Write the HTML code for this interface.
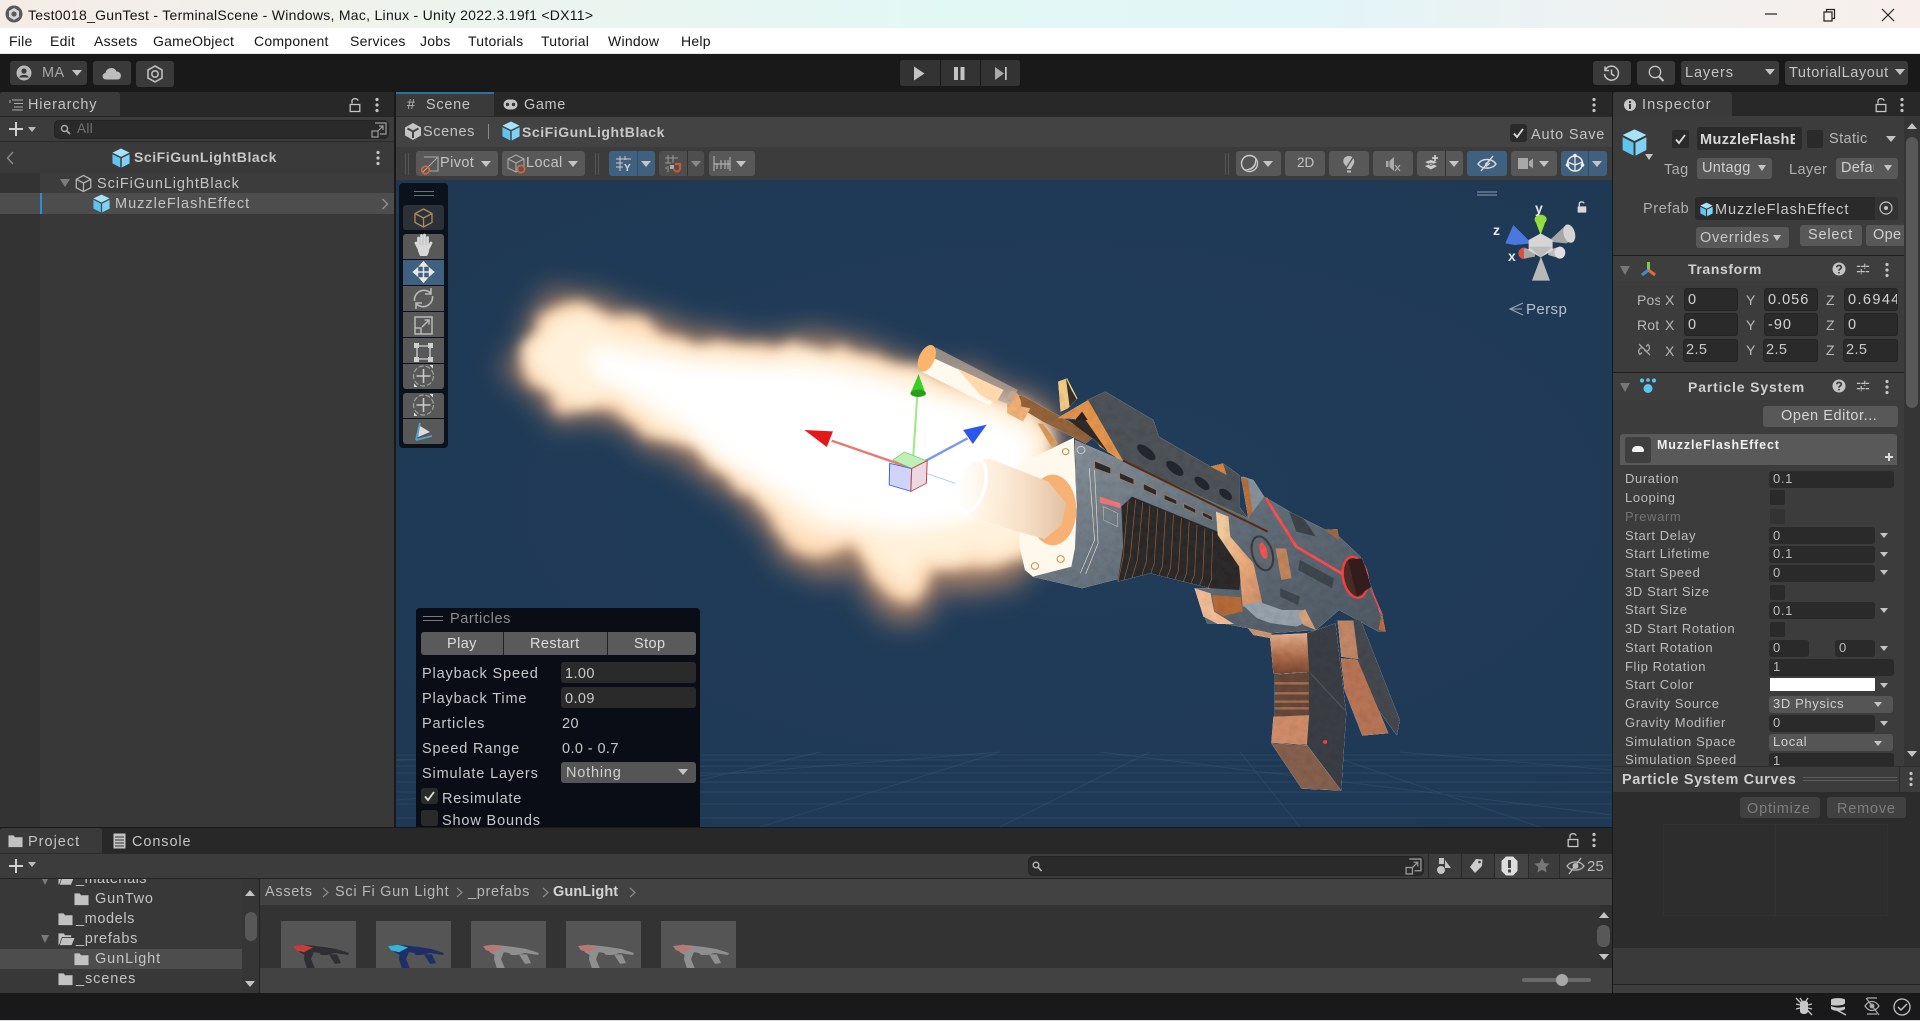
<!DOCTYPE html>
<html><head><meta charset="utf-8"><title>Unity</title>
<style>
*{box-sizing:border-box}
html,body{margin:0;padding:0;width:1920px;height:1021px;overflow:hidden;background:#191919}
body{position:relative;font-family:"Liberation Sans",sans-serif}
.a{position:absolute}
.t{position:absolute;white-space:nowrap;line-height:20px;height:20px;font-size:14.5px;letter-spacing:.4px;color:#c4c4c4}
.b{font-weight:bold}
.m{color:#141414;font-size:14px;letter-spacing:.25px}
.s{font-size:13px;letter-spacing:.62px;color:#bdbdbd;line-height:18px;height:18px}
.btn{position:absolute;background:#585858;border-radius:3px}
.blue{background:#40607f}
.f{position:absolute;background:#2a2a2a;border-radius:3px;border:1px solid #242424}
.ar{position:absolute;width:0;height:0;border-left:5.5px solid transparent;border-right:5.5px solid transparent;border-top:6.5px solid #c4c4c4}
.n{border-left-width:4.5px;border-right-width:4.5px;border-top-width:5px}
svg{position:absolute;overflow:visible}
.sep{position:absolute;width:1px;background:#2a2a2a}
.p{letter-spacing:.85px;color:#c8c8c8}
</style></head><body>

<svg width="0" height="0" style="left:0;top:0">
<defs>
<symbol id="cube" viewBox="0 0 20 22"><path d="M10 .5 19.5 5 10 9.8 .5 5Z" fill="#a6e3f8"/><path d="M.5 6.8 9.2 11.2V21.5L.5 17Z" fill="#5fc5ef"/><path d="M19.5 6.8 10.8 11.2V21.5L19.5 17Z" fill="#7fd2f4"/></symbol>
<symbol id="cubeo" viewBox="0 0 20 22"><path d="M10 1.5 18.5 6V16L10 20.5 1.5 16V6ZM1.5 6 10 10.5 18.5 6M10 10.5V20.5" fill="none" stroke="#b5b5b5" stroke-width="1.5"/></symbol>
<symbol id="dots" viewBox="0 0 4 16"><circle cx="2" cy="2.5" r="1.6" fill="#c4c4c4"/><circle cx="2" cy="8" r="1.6" fill="#c4c4c4"/><circle cx="2" cy="13.5" r="1.6" fill="#c4c4c4"/></symbol>
<symbol id="lock" viewBox="0 0 12 16"><path d="M3 6.5V3.8C3 1 9 1 9 3.8" fill="none" stroke="#c4c4c4" stroke-width="1.3"/><rect x="1.2" y="7.5" width="9.6" height="7" fill="none" stroke="#c4c4c4" stroke-width="1.3"/></symbol>
<symbol id="folder" viewBox="0 0 16 14"><path d="M.5 1H6L7.5 3H15.5V13.5H.5Z" fill="#c2c2c2"/></symbol>
<symbol id="folderopen" viewBox="0 0 18 14"><path d="M.5 1H6L7.5 3H14V5H4L1.7 12 .5 13.5Z" fill="#c2c2c2"/><path d="M4.5 6H17.5L14.5 13.5H2Z" fill="#c2c2c2"/></symbol>
<symbol id="help" viewBox="0 0 14 14"><circle cx="7" cy="7" r="6.5" fill="#c4c4c4"/><path d="M4.8 5.4C4.8 2.8 9.3 2.8 9.3 5.4 9.3 7 7 7 7 8.7M7 10V11.4" stroke="#3c3c3c" stroke-width="1.7" fill="none"/></symbol>
<symbol id="slid" viewBox="0 0 16 16"><path d="M1 5H15M1 11H15M10 2V8M6 8V14" stroke="#c4c4c4" stroke-width="1.3" fill="none" stroke-dasharray="4 1"/></symbol>
<symbol id="extlink" viewBox="0 0 16 16"><path d="M4 1H15V12H9M1 9H7V15H1ZM7 9 12 4M8 4H12V8" fill="none" stroke="#9a9a9a" stroke-width="1.2"/></symbol>
<linearGradient id="barrel" x1="1" y1="0" x2="0" y2="0"><stop offset="0" stop-color="#e2c0a2"/><stop offset=".35" stop-color="#f5dfc6"/><stop offset=".7" stop-color="#ffefdb" stop-opacity=".8"/><stop offset="1" stop-color="#fff" stop-opacity=".15"/></linearGradient>
<linearGradient id="body" x1="0" y1="0" x2="1" y2="1"><stop offset="0" stop-color="#8b959d"/><stop offset=".5" stop-color="#626e79"/><stop offset="1" stop-color="#4f5963"/></linearGradient>
<linearGradient id="cop" x1="0" y1="0" x2="0" y2="1"><stop offset="0" stop-color="#e8b08c"/><stop offset=".55" stop-color="#b06f4e"/><stop offset="1" stop-color="#7a4630"/></linearGradient>
<linearGradient id="trim" x1="0" y1="0" x2="1" y2="1"><stop offset="0" stop-color="#f2d6a8"/><stop offset=".6" stop-color="#e9a878"/><stop offset="1" stop-color="#cc8c68"/></linearGradient>
<filter id="fA" x="-30%" y="-30%" width="160%" height="160%"><feTurbulence type="fractalNoise" baseFrequency=".03 .045" numOctaves="3" seed="4"/><feDisplacementMap in="SourceGraphic" scale="26" xChannelSelector="R" yChannelSelector="G"/><feGaussianBlur stdDeviation="14"/></filter>
<filter id="fB" x="-30%" y="-30%" width="160%" height="160%"><feTurbulence type="fractalNoise" baseFrequency=".035 .055" numOctaves="3" seed="9"/><feDisplacementMap in="SourceGraphic" scale="28" xChannelSelector="R" yChannelSelector="G"/><feGaussianBlur stdDeviation="7"/></filter>
<filter id="fD" x="-30%" y="-30%" width="160%" height="160%"><feTurbulence type="fractalNoise" baseFrequency=".03 .05" numOctaves="3" seed="14"/><feDisplacementMap in="SourceGraphic" scale="24" xChannelSelector="R" yChannelSelector="G"/><feGaussianBlur stdDeviation="8"/></filter>
<filter id="fC" x="-20%" y="-20%" width="140%" height="140%"><feGaussianBlur stdDeviation="9"/></filter>
<filter id="tex" x="-5%" y="-5%" width="110%" height="110%"><feTurbulence type="fractalNoise" baseFrequency=".045" numOctaves="3" seed="7"/><feColorMatrix values=".32 0 0 0 .79 .32 0 0 0 .79 .32 0 0 0 .79 0 0 0 0 1"/><feComposite in2="SourceAlpha" operator="in" result="n"/><feBlend in="SourceGraphic" in2="n" mode="multiply"/></filter>
<clipPath id="ribs"><path d="M620 500 650 470 890 575 960 680 950 750 870 745 700 700 610 725 625 620Z"/></clipPath>
<clipPath id="blk"><path d="M330 375 487 293 495 500 490 625 480 680 372 710 350 690 335 620Z"/></clipPath>
</defs>
</svg>

<!-- title bar -->
<div class="a" style="left:0;top:0;width:1920px;height:28px;background:linear-gradient(90deg,#f6ece6 0%,#eef3ee 22%,#e2f8f5 50%,#e2f5f7 68%,#eef2f2 82%,#f8efec 100%)"></div>
<svg style="left:5px;top:5px" width="18" height="18" viewBox="0 0 18 18"><circle cx="9" cy="9" r="8.5" fill="#5a5a5a"/><path d="M9 3 14 6V12L9 15 4 12V6Z" fill="#d8d8d8"/><circle cx="9" cy="9" r="2.6" fill="#5a5a5a"/></svg>
<div class="t m" style="left:28px;top:5px;letter-spacing:.28px">Test0018_GunTest - TerminalScene - Windows, Mac, Linux - Unity 2022.3.19f1 &lt;DX11&gt;</div>
<svg style="left:1765px;top:8px" width="140" height="14" viewBox="0 0 140 14"><path d="M0 6H12" stroke="#222" stroke-width="1.2"/><path d="M59 4H67V13H59ZM61.5 4V1.5H69.5V10.5H67" fill="none" stroke="#222" stroke-width="1.2"/><path d="M117 1 129 13M129 1 117 13" stroke="#222" stroke-width="1.2"/></svg>

<!-- menu -->
<div class="a" style="left:0;top:28px;width:1920px;height:25px;background:#fff"></div>
<div class="a" style="left:0;top:53px;width:1920px;height:1px;background:#e8e8e8"></div>
<div class="t m" style="left:9px;top:31px">File</div>
<div class="t m" style="left:50px;top:31px">Edit</div>
<div class="t m" style="left:94px;top:31px">Assets</div>
<div class="t m" style="left:153px;top:31px">GameObject</div>
<div class="t m" style="left:254px;top:31px">Component</div>
<div class="t m" style="left:350px;top:31px">Services</div>
<div class="t m" style="left:420px;top:31px">Jobs</div>
<div class="t m" style="left:468px;top:31px">Tutorials</div>
<div class="t m" style="left:541px;top:31px">Tutorial</div>
<div class="t m" style="left:608px;top:31px">Window</div>
<div class="t m" style="left:681px;top:31px">Help</div>

<!-- main toolbar -->
<div class="a" style="left:0;top:54px;width:1920px;height:38px;background:#191919"></div>
<div class="btn" style="left:10px;top:61px;width:77px;height:24px;background:#3a3a3a"></div>
<svg style="left:16px;top:65px" width="16" height="16" viewBox="0 0 16 16"><circle cx="8" cy="8" r="7.5" fill="#b8b8b8"/><circle cx="8" cy="6" r="2.6" fill="#3a3a3a"/><path d="M3.2 12.5C4 9 12 9 12.8 12.5" fill="#3a3a3a"/></svg>
<div class="t" style="left:42px;top:63px;color:#a8a8a8">MA</div>
<div class="ar" style="left:72px;top:70px"></div>
<div class="btn" style="left:93px;top:61px;width:38px;height:24px;background:#3a3a3a"></div>
<svg style="left:102px;top:66px" width="20" height="14" viewBox="0 0 20 14"><path d="M4.5 13.5C-.5 13.5 -.5 7.5 3.5 7 4 2 12 -.5 14.5 5.5 20 5.5 20.5 13.5 15.5 13.5Z" fill="#bdbdbd"/></svg>
<div class="btn" style="left:136px;top:61px;width:38px;height:26px;background:#3a3a3a"></div>
<svg style="left:147px;top:65px" width="16" height="18" viewBox="0 0 16 18"><path d="M8 1 15 5V13L8 17 1 13V5Z" fill="none" stroke="#bdbdbd" stroke-width="1.6"/><circle cx="8" cy="9" r="3.2" fill="none" stroke="#bdbdbd" stroke-width="1.6"/></svg>
<div class="btn" style="left:900px;top:60px;width:120px;height:26px;background:#333"></div>
<div class="a" style="left:940px;top:60px;width:1px;height:26px;background:#191919"></div>
<div class="a" style="left:980px;top:60px;width:1px;height:26px;background:#191919"></div>
<svg style="left:914px;top:66px" width="96" height="15" viewBox="0 0 96 15"><path d="M0 .5 10.5 7.5 0 14.5Z" fill="#c4c4c4"/><rect x="40" y="1" width="4" height="13" fill="#c4c4c4"/><rect x="46.5" y="1" width="4" height="13" fill="#c4c4c4"/><path d="M81 1 90 7.5 81 14Z" fill="#aaa"/><rect x="91" y="1" width="1.7" height="13" fill="#c4c4c4"/></svg>
<div class="btn" style="left:1593px;top:61px;width:38px;height:24px;background:#3a3a3a"></div>
<svg style="left:1603px;top:65px" width="17" height="17" viewBox="0 0 17 17"><path d="M2.2 5A7 7 0 1 1 1.5 9M2 1.5V5.5H6M8.5 4.5V9L11.5 11" fill="none" stroke="#c4c4c4" stroke-width="1.5"/></svg>
<div class="btn" style="left:1637px;top:61px;width:38px;height:24px;background:#3a3a3a"></div>
<svg style="left:1648px;top:65px" width="17" height="17" viewBox="0 0 17 17"><circle cx="7" cy="7" r="5.7" fill="none" stroke="#c4c4c4" stroke-width="1.3"/><path d="M11 11.5 15.5 16" stroke="#c4c4c4" stroke-width="2"/></svg>
<div class="btn" style="left:1681px;top:61px;width:98px;height:24px;background:#3a3a3a"></div>
<div class="t" style="left:1685px;top:63px;letter-spacing:.9px">Layers</div>
<div class="ar" style="left:1765px;top:69px"></div>
<div class="btn" style="left:1785px;top:61px;width:123px;height:24px;background:#3a3a3a"></div>
<div class="t" style="left:1789px;top:63px;letter-spacing:.6px">TutorialLayout</div>
<div class="ar" style="left:1895px;top:69px"></div>

<!-- hierarchy -->
<div class="a" style="left:0;top:92px;width:394px;height:24px;background:#282828"></div>
<div class="a" style="left:0;top:92px;width:120px;height:24px;background:#3a3a3a;border-radius:3px 3px 0 0"></div>
<svg style="left:9px;top:99px" width="14" height="12" viewBox="0 0 14 12"><path d="M3 1H14M5 4.5H14M5 8H14M3 11H14M1 1V4" stroke="#aaa" stroke-width="1" fill="none"/></svg>
<div class="t" style="left:28px;top:95px;letter-spacing:.8px">Hierarchy</div>
<svg style="left:349px;top:97px" width="12" height="16"><use href="#lock"/></svg>
<svg style="left:375px;top:97px" width="4" height="16"><use href="#dots"/></svg>
<div class="a" style="left:0;top:116px;width:394px;height:26px;background:#3c3c3c;border-top:1px solid #232323;border-bottom:1px solid #2a2a2a"></div>
<svg style="left:8px;top:121px" width="16" height="16" viewBox="0 0 16 16"><path d="M8 1V15M1 8H15" stroke="#d0d0d0" stroke-width="2"/></svg>
<div class="ar" style="left:28px;top:127px;border-top-color:#bbb;border-left-width:4.5px;border-right-width:4.5px;border-top-width:5.5px"></div>
<div class="f" style="left:54px;top:120px;width:335px;height:19px;border-radius:5px"></div>
<svg style="left:60px;top:124px" width="12" height="12" viewBox="0 0 12 12"><circle cx="4.5" cy="4.5" r="3" fill="none" stroke="#aaa" stroke-width="1.4"/><path d="M6.5 6.5 10 10" stroke="#aaa" stroke-width="1.8"/></svg>
<div class="t" style="left:77px;top:119px;color:#737373;font-size:13.5px">All</div>
<svg style="left:371px;top:122px" width="16" height="16"><use href="#extlink"/></svg>
<div class="a" style="left:0;top:142px;width:394px;height:31px;background:#3a3a3a"></div>
<svg style="left:6px;top:151px" width="9" height="14" viewBox="0 0 9 14"><path d="M7 1 1.5 7 7 13" fill="none" stroke="#8a8a8a" stroke-width="1.4"/></svg>
<svg style="left:112px;top:148px" width="18" height="20"><use href="#cube"/></svg>
<div class="t b" style="left:134px;top:147px;letter-spacing:.55px;color:#c8c8c8;font-size:14px">SciFiGunLightBlack</div>
<svg style="left:376px;top:150px" width="4" height="16"><use href="#dots"/></svg>
<div class="a" style="left:0;top:173px;width:394px;height:654px;background:#383838"></div>
<div class="a" style="left:0;top:173px;width:40px;height:654px;background:#333"></div>
<div class="a" style="left:40px;top:173px;width:354px;height:20px;background:#3c3c3c"></div>
<div class="a" style="left:60px;top:179px;width:0;height:0;border-left:5px solid transparent;border-right:5px solid transparent;border-top:8px solid #7c7c7c"></div>
<svg style="left:75px;top:174px" width="17" height="19"><use href="#cubeo"/></svg>
<div class="t" style="left:97px;top:174px;letter-spacing:.9px">SciFiGunLightBlack</div>
<div class="a" style="left:0;top:193px;width:394px;height:21px;background:#4d4d4d"></div>
<div class="a" style="left:40px;top:193px;width:2px;height:21px;background:#2a8fca"></div>
<svg style="left:93px;top:194px" width="17" height="19"><use href="#cube"/></svg>
<div class="t" style="left:115px;top:194px;letter-spacing:1px">MuzzleFlashEffect</div>
<svg style="left:381px;top:198px" width="8" height="12" viewBox="0 0 8 12"><path d="M1.5 1 6.5 6 1.5 11" fill="none" stroke="#8e8e8e" stroke-width="1.5"/></svg>
<div class="a" style="left:394px;top:92px;width:2px;height:736px;background:#191919"></div>

<!-- scene tabs -->
<div class="a" style="left:396px;top:92px;width:1216px;height:24px;background:#282828"></div>
<div class="a" style="left:396px;top:92px;width:98px;height:24px;background:#3a3a3a;border-top:2px solid #2f6f9f"></div>
<div class="t" style="left:407px;top:95px;color:#bbb">#</div>
<div class="t" style="left:426px;top:95px;letter-spacing:.7px">Scene</div>
<svg style="left:503px;top:99px" width="15" height="11" viewBox="0 0 15 11"><rect x=".5" y=".5" width="14" height="10" rx="5" fill="#c4c4c4"/><circle cx="4.5" cy="5.5" r="1.7" fill="#333"/><circle cx="10.5" cy="5.5" r="1.7" fill="#333"/></svg>
<div class="t" style="left:524px;top:95px;letter-spacing:.6px">Game</div>
<svg style="left:1592px;top:97px" width="4" height="16"><use href="#dots"/></svg>
<div class="a" style="left:396px;top:116px;width:1216px;height:31px;background:#434343;border-top:1px solid #2c2c2c"></div>
<svg style="left:404px;top:122px" width="18" height="19" viewBox="0 0 18 19"><path d="M9 1 17 5.5V13.5L9 18 1 13.5V5.5Z" fill="#c4c4c4"/><path d="M9 9.5 3.5 6.5M9 9.5 14.5 6.5M9 9.5V16" stroke="#434343" stroke-width="2"/></svg>
<div class="t" style="left:423px;top:122px;letter-spacing:.6px">Scenes</div>
<div class="a" style="left:488px;top:124px;width:1px;height:15px;background:#8a8a8a"></div>
<svg style="left:502px;top:121px" width="18" height="20"><use href="#cube"/></svg>
<div class="t b" style="left:522px;top:122px;letter-spacing:.55px;font-size:14px;color:#c8c8c8">SciFiGunLightBlack</div>
<div class="a" style="left:1510px;top:124px;width:17px;height:18px;background:#2a2a2a;border-radius:3px"></div>
<svg style="left:1512px;top:127px" width="13" height="12" viewBox="0 0 13 12"><path d="M2 6.5 5 10 11 2" fill="none" stroke="#ddd" stroke-width="1.8"/></svg>
<div class="t" style="left:1531px;top:125px;letter-spacing:.8px">Auto Save</div>

<!-- scene toolbar -->
<div class="a" style="left:396px;top:147px;width:1216px;height:33px;background:#3c3c3c"></div>
<div class="a" style="left:405px;top:153px;width:1px;height:22px;background:#555"></div>
<div class="a" style="left:408px;top:153px;width:1px;height:22px;background:#555"></div>
<div class="btn" style="left:416px;top:151px;width:82px;height:25px"></div>
<svg style="left:420px;top:153px" width="20" height="22" viewBox="0 0 20 22"><path d="M4 4H18V18H9M3 19 17 5" fill="none" stroke="#aaa" stroke-width="1.1"/><circle cx="5.5" cy="17" r="3.8" fill="none" stroke="#d8663a" stroke-width="1.7"/></svg>
<div class="t" style="left:440px;top:153px">Pivot</div>
<div class="ar" style="left:481px;top:161px"></div>
<div class="btn" style="left:502px;top:151px;width:83px;height:25px"></div>
<svg style="left:506px;top:153px" width="20" height="22" viewBox="0 0 20 22"><path d="M10 2 18 6V15L10 19 2 15V6ZM2 6 10 10 18 6M10 10V19" fill="none" stroke="#aaa" stroke-width="1.1"/><circle cx="15" cy="16" r="3.6" fill="#585858" stroke="#d8663a" stroke-width="1.7"/></svg>
<div class="t" style="left:526px;top:153px">Local</div>
<div class="ar" style="left:568px;top:161px"></div>
<div class="a" style="left:595px;top:153px;width:1px;height:22px;background:#555"></div>
<div class="a" style="left:598px;top:153px;width:1px;height:22px;background:#555"></div>
<div class="btn blue" style="left:609px;top:151px;width:46px;height:25px"></div>
<div class="a" style="left:637px;top:151px;width:1px;height:25px;background:#2e4a66"></div>
<svg style="left:615px;top:155px" width="17" height="17" viewBox="0 0 17 17"><path d="M1 4H16M1 8H8M1 12H8M5 1V16M10 1V5" stroke="#ccc" stroke-width="1" fill="none"/><text x="9" y="16" font-family="Liberation Sans" font-size="10" font-weight="bold" fill="#ddd">Y</text></svg>
<div class="ar" style="left:641px;top:161px"></div>
<div class="btn" style="left:659px;top:151px;width:45px;height:25px;background:#4e4e4e"></div>
<div class="a" style="left:687px;top:151px;width:1px;height:25px;background:#333"></div>
<svg style="left:664px;top:154px" width="18" height="19" viewBox="0 0 18 19"><path d="M1 4H14M4 1V9M9 1V9M1 9H7M1 14H3M4 12V18" stroke="#999" stroke-width="1"/><rect x="6" y="11" width="4" height="4" fill="#aaa"/><path d="M11 10H16V14.5A3 3 0 0 1 10 14.5" fill="none" stroke="#c65a30" stroke-width="2.2"/></svg>
<div class="ar" style="left:691px;top:161px;border-top-color:#8a8a8a"></div>
<div class="btn" style="left:709px;top:151px;width:46px;height:25px"></div>
<svg style="left:713px;top:154px" width="18" height="19" viewBox="0 0 18 19"><path d="M1 2V17M17 3V17M4 9V15M8 6V15M12 6V15M15 6V15M1 10H17" stroke="#bbb" stroke-width="1" fill="none"/></svg>
<div class="ar" style="left:736px;top:161px"></div>
<div class="a" style="left:1225px;top:153px;width:1px;height:22px;background:#555"></div>
<div class="a" style="left:1228px;top:153px;width:1px;height:22px;background:#555"></div>
<div class="btn" style="left:1236px;top:151px;width:45px;height:25px"></div>
<svg style="left:1240px;top:154px" width="19" height="19" viewBox="0 0 19 19"><circle cx="9.5" cy="9.5" r="8" fill="#555" stroke="#ccc" stroke-width="1.4"/><path d="M4 15C10 16 16 12 15 4 19 11 12 19 4 15Z" fill="#ccc"/></svg>
<div class="ar" style="left:1263px;top:161px"></div>
<div class="btn" style="left:1285px;top:151px;width:40px;height:25px"></div>
<div class="t" style="left:1297px;top:153px;font-size:13.5px;letter-spacing:0">2D</div>
<div class="btn" style="left:1329px;top:151px;width:40px;height:25px"></div>
<svg style="left:1342px;top:155px" width="15" height="18" viewBox="0 0 15 18"><path d="M7 1C1 1 0 7 3 10 4.5 11.5 4.5 13 5 14H9C9.5 12 11 10.5 11.7 9 13.5 5 11 1 7 1ZM5 15.5H9V17.5H5Z" fill="#bdbdbd"/><path d="M12 1 3 15" stroke="#585858" stroke-width="1.4"/></svg>
<div class="btn" style="left:1373px;top:151px;width:40px;height:25px"></div>
<svg style="left:1386px;top:156px" width="15" height="16" viewBox="0 0 15 16"><path d="M0 5H2.5V11H0ZM3.5 5 8 1V15L3.5 11Z" fill="#aaa"/><path d="M9 9 14 15M14 9 9 15" stroke="#aaa" stroke-width="1.3"/></svg>
<div class="btn" style="left:1417px;top:151px;width:46px;height:25px"></div>
<div class="a" style="left:1445px;top:151px;width:1px;height:25px;background:#333"></div>
<svg style="left:1423px;top:154px" width="17" height="18" viewBox="0 0 17 18"><path d="M1 12 8 9 15 12 8 16ZM1 8 8 5.5 15 8 8 11.5Z" fill="#ccc" stroke="#585858" stroke-width=".8"/><path d="M12 1V7M9 4H15" stroke="#ccc" stroke-width="1.8"/></svg>
<div class="ar" style="left:1449px;top:161px"></div>
<div class="btn blue" style="left:1467px;top:151px;width:40px;height:25px"></div>
<svg style="left:1477px;top:154px" width="20" height="19" viewBox="0 0 20 19"><path d="M1 10C5 4 15 4 19 10 15 15.5 5 15.5 1 10Z" fill="none" stroke="#ddd" stroke-width="1.4"/><path d="M8 10.5 12 7M9 12.5 13 9" stroke="#ddd" stroke-width="1.2"/><path d="M16 2 4 17" stroke="#ddd" stroke-width="1.4"/></svg>
<div class="btn" style="left:1511px;top:151px;width:46px;height:25px"></div>
<svg style="left:1518px;top:157px" width="16" height="13" viewBox="0 0 16 13"><rect x="0" y="1" width="10" height="11" fill="#a8a8a8"/><path d="M11 4.5 15 1.5V11.5L11 8.5Z" fill="#a8a8a8"/></svg>
<div class="ar" style="left:1539px;top:161px"></div>
<div class="btn blue" style="left:1561px;top:151px;width:46px;height:25px"></div>
<div class="a" style="left:1588px;top:151px;width:1px;height:25px;background:#2e4a66"></div>
<svg style="left:1565px;top:153px" width="20" height="21" viewBox="0 0 20 21"><circle cx="10" cy="10.5" r="7.5" fill="none" stroke="#e8e8e8" stroke-width="1.6"/><path d="M2.5 9 10 12 17.5 9M10 3V18" stroke="#e8e8e8" stroke-width="1.3" fill="none"/><circle cx="10" cy="2.5" r="1.8" fill="#eee"/><circle cx="2.5" cy="12" r="1.8" fill="#eee"/><circle cx="17.5" cy="12" r="1.8" fill="#eee"/></svg>
<div class="ar" style="left:1592px;top:161px"></div>

<!-- scene view -->
<div class="a" style="left:396px;top:180px;width:1216px;height:647px;background:radial-gradient(ellipse at 55% 50%,#213c59 0%,#1f3a56 70%,#1f3853 100%);overflow:hidden">
<svg style="left:0;top:0" width="1216" height="647" viewBox="396 180 1216 647">
 <g stroke="#5f84a6" stroke-opacity=".17" stroke-width="1" fill="none">
  <path d="M396 755H1612M396 760H1612M396 766H1612M396 773H1612M396 782H1612M396 792H1612M396 804H1612M396 818H1612"/>
  <path d="M396 800 1000 752M396 760 600 752M1612 770 1400 752M1612 815 1100 752M1000 827 1150 752M760 827 1000 752M1300 827 1240 752M1540 827 1320 752M500 827 820 752"/>
 </g>
 <!-- flame layers -->
 <g filter="url(#fA)"><path transform="translate(480 270) scale(.408 .3333)" d="M60 290 110 190 170 70 240 70 320 90 390 130 470 165 560 190 690 205 830 195 960 225 1070 280 1200 310 1360 380 1430 470 1440 780 1340 920 1210 950 1120 970 1060 1070 970 1030 920 880 840 930 750 870 680 740 590 660 490 560 410 530 290 440 190 460 110 350Z" fill="#c9926c" fill-opacity=".8"/></g>
 <g filter="url(#fB)"><path transform="translate(480 270) scale(.408 .3333)" d="M85 290 130 190 175 105 240 105 310 125 380 155 450 190 540 215 680 235 820 225 950 250 1060 295 1190 340 1340 410 1400 480 1400 780 1320 880 1200 900 1120 910 1060 1000 980 960 920 820 840 860 760 830 690 710 600 630 500 530 420 500 300 410 200 420 130 330Z" fill="#ffdcb8"/></g>
 <g filter="url(#fD)"><path transform="translate(480 270) scale(.408 .3333)" d="M120 290 150 190 190 130 240 130 310 150 380 180 450 215 540 240 680 260 820 250 950 275 1050 320 1190 370 1330 430 1380 500 1380 760 1300 850 1180 860 1100 870 1050 950 990 900 920 780 840 810 770 780 700 680 610 600 510 500 430 470 310 385 210 385 150 320Z" fill="#fff1da"/></g>
 <g filter="url(#fC)"><path transform="translate(480 270) scale(.408 .3333)" d="M260 230 420 260 540 285 700 290 850 295 1000 340 1200 410 1350 490 1340 690 1180 760 1040 780 850 750 730 660 600 570 480 450 370 370 280 320Z" fill="#fff"/></g>

 <!-- gun (textured parts) -->
 <g transform="translate(900 340) scale(.357 .3333)" filter="url(#tex)">
  <path d="M1225 840 1290 840 1400 1140 1392 1187 1340 1110 1280 960 1238 950Z" fill="#454950"/>
  <path d="M1235 955 1282 960 1368 1180 1295 1187 1245 1050Z" fill="#b87456"/>
  <path d="M1226 842 1270 842 1284 958 1236 950Z" fill="#c08868"/>
  <path d="M1140 880 1220 850 1250 1120 1236 1352 1140 1215Z" fill="#3a3e45"/>
  <path d="M1036 885 1140 880 1146 996 1046 1002Z" fill="url(#cop)"/>
  <path d="M1050 1004 1146 996 1146 1126 1050 1132Z" fill="#66483a"/>
  <path d="M1050 1030H1145M1050 1060H1145M1050 1085H1145M1050 1105H1145" stroke="#a56f4f" stroke-width="7"/>
  <path d="M1046 1130 1146 1126 1140 1214 1040 1208Z" fill="#d08c68"/>
  <path d="M1040 1210 1140 1216 1236 1352 1125 1346Z" fill="#86604d"/>
  <circle cx="1191" cy="1206" r="6" fill="#ff4040"/>
  <path d="M1150 1000 1245 1110" stroke="#55595f" stroke-width="3"/>

  <!-- rod -->
  <path d="M300 180 340 165 450 230 545 290 520 310 400 245Z" fill="#94643a"/>
  <path d="M385 250 400 250 442 310 425 322Z" fill="#dc9a58"/>
  <path d="M300 190 365 205 345 245 300 220Z" fill="#f0b27a"/>
  <ellipse cx="322" cy="180" rx="15" ry="28" transform="rotate(-22 322 180)" fill="#f0aa72"/>

  <!-- rear sight + top rail -->
  <path d="M443 125 468 115 497 175 470 205 450 215Z" fill="#f2ca84"/>
  <path d="M465 115 480 150 495 178 475 200Z" fill="#35302b"/>
  <path d="M525 180 575 155 710 240 725 290 870 380 905 370 950 405 950 500 975 535 625 365Z" fill="#4e5358"/>
  <path d="M870 380 905 370 915 405Z" fill="#d08448"/>
  <path d="M960 410 990 420 1020 470 1030 575 975 535Z" fill="#87929a"/>
  <path d="M955 410 975 420 990 535 975 530Z" fill="#b8703a"/>
  <g fill="#24282e"><ellipse cx="690" cy="337" rx="32" ry="14" transform="rotate(42 690 337)"/><ellipse cx="770" cy="385" rx="30" ry="14" transform="rotate(42 770 385)"/><ellipse cx="846" cy="430" rx="26" ry="13" transform="rotate(42 846 430)"/><ellipse cx="912" cy="463" rx="22" ry="12" transform="rotate(42 912 463)"/></g>
  <path d="M440 235 527 180 628 368 560 320 515 240 470 235Z" fill="#e4944c"/>
  <path d="M490 240 510 215 526 240Z" fill="#2a2420"/>
  <path d="M470 240 520 240 585 340 540 295Z" fill="#2e2a28"/>

  <!-- body -->
  <path d="M490 300 630 365 975 535 1020 470 1100 520 1230 590 1290 650 1330 770 1360 875 1340 875 1230 810 1165 870 1040 880 975 865 900 850 860 850 825 745 870 745 700 700 600 720 510 745 370 710 480 680 495 500Z" fill="url(#body)"/>
  <path d="M625 362 1030 575" stroke="#5a2c16" stroke-width="6"/>
  <g fill="#2a2d33" stroke="#c9884e" stroke-width="1.5"><path d="M545 363 590 383 590 402 546 385Z"/><path d="M615 398 655 417 655 434 615 416Z"/><path d="M682 431 718 450 718 466 682 449Z"/><path d="M740 464 775 481 775 494 740 478Z"/><path d="M795 491 828 508 828 520 795 503Z"/><path d="M848 516 875 530 875 542 848 528Z"/></g>
  <path d="M530 385 545 600 505 700M545 390 555 610 520 702" stroke="#f1e6d6" stroke-width="1.8" fill="none"/>
  <path d="M560 470 618 490 618 505 560 488Z" fill="#f07878"/>
  <path d="M570 500 610 520 610 560 570 540Z" fill="none" stroke="#d6c6aa" stroke-width="1.5"/>
  <!-- ribs -->
  <path d="M620 500 650 470 890 575 960 680 950 750 870 745 700 700 610 725 625 620Z" fill="#2d2a2a"/>
  <g clip-path="url(#ribs)" fill="none" stroke="#a8683e" stroke-width="2" opacity=".85"><path d="M640 470 625 650 610 730M660 480 645 650 625 730M680 488 665 660 645 730M700 497 690 665 670 730M722 505 712 672 690 735M744 515 735 680 712 740M766 525 758 685 735 745M788 535 780 692 758 750M810 545 803 700 782 755M832 555 825 705 805 755M854 565 848 712 830 760M876 575 872 720 856 760"/></g>
  <!-- copper trim -->
  <path d="M885 515 920 530 925 590 990 670 1015 790 960 800 950 680 890 585Z" fill="url(#trim)"/>
  <path d="M825 745 870 760 880 815 935 852 890 852 850 830Z" fill="#f2bc96"/>
  <path d="M875 765 955 772 960 815 905 828 880 812Z" fill="#b56a38"/>
  <path d="M960 795 1005 785 1070 810 1135 810 1145 845 1110 860 1040 850 1000 835Z" fill="#96a2ac"/>
  <path d="M1115 820 1135 808 1165 870 1130 855Z" fill="#d8a27c"/>
  <path d="M975 865 1040 880 1040 895 990 885Z" fill="#d09670"/>
  <!-- receiver details -->
  <path d="M1025 475 1110 620 1240 702" fill="none" stroke="#ff4c4c" stroke-width="8"/>
  <path d="M1090 515 1130 535 1165 590 1110 575Z" fill="#3e444b"/>
  <path d="M1120 660 1215 715 1210 745 1115 690Z" fill="#3f464e"/>
  <path d="M1065 745 1120 770 1115 795 1065 770Z" fill="#3f464e"/>
  <ellipse cx="1015" cy="640" rx="28" ry="52" transform="rotate(-15 1015 640)" fill="#616a73" stroke="#3c3c3c" stroke-width="6"/>
  <ellipse cx="1018" cy="632" rx="10" ry="25" transform="rotate(-15 1018 632)" fill="#ee5450"/>
  <path d="M1052 625 1082 625 1097 715 1068 720Z" fill="#c0865e"/>
  <ellipse cx="1275" cy="712" rx="34" ry="62" transform="rotate(-10 1275 712)" fill="#4a2d28" stroke="#f84040" stroke-width="7"/>
  <path d="M1255 660 1295 655 1320 740 1280 770Z" fill="#341f1c"/>
  <path d="M1318 745 1350 825" stroke="#f84040" stroke-width="4"/>
  <path d="M1340 870 1360 875 1350 820Z" fill="#bc6a3c"/>
  <path d="M1190 570 1225 567 1230 600Z" fill="#a2653f"/>
 </g>

 <!-- unfiltered: scope, front block, barrel -->
 <g transform="translate(900 340) scale(.357 .3333)">
  <path d="M100 22 330 150 310 195 60 90Z" fill="#b5a698" fill-opacity=".75"/>
  <path d="M85 50 290 150 250 197 60 95Z" fill="#fff9ee"/>
  <path d="M160 85 290 150 268 190 225 165Z" fill="#ffd9ac"/>
  <ellipse cx="75" cy="55" rx="22" ry="42" transform="rotate(22 75 55)" fill="#fab46c"/>
  <path d="M330 375 487 293 495 500 490 625 480 680 372 710 350 690 335 620Z" fill="#fff8ec"/>
  <g clip-path="url(#blk)"><ellipse cx="428" cy="510" rx="66" ry="106" fill="#f6b274"/></g>
  <path d="M466 490 452 555 405 597 330 575 200 530 140 490 180 370 250 355 415 425Z" fill="url(#barrel)"/>
  <ellipse cx="200" cy="437" rx="38" ry="80" transform="rotate(14 200 437)" fill="none" stroke="#fff" stroke-width="10"/>
  <g fill="none" stroke="#c79452" stroke-width="3"><circle cx="464" cy="335" r="9"/><circle cx="378" cy="678" r="10"/><circle cx="450" cy="657" r="10"/></g>
  <circle cx="507" cy="330" r="11" fill="none" stroke="#c8c8c8" stroke-width="3"/>
 </g>

 <!-- translate gizmo -->
 <g transform="translate(480 270) scale(.408 .3333)">
  <path d="M1058 595 862 512" stroke="#e67a75" stroke-width="7"/>
  <path d="M1058 595 1195 505" stroke="#7899ee" stroke-width="7"/>
  <path d="M1060 595 1072 370" stroke="#9ee88a" stroke-width="5"/>
  <path d="M1058 595 1165 640" stroke="#a7d4ef" stroke-width="3"/>
  <path d="M1058 595 1012 570 1040 546 1094 572Z" fill="#c0f0b8" stroke="#72c872" stroke-width="2"/>
  <path d="M1004 580 1058 596 1056 664 1003 645Z" fill="#d0d4f8" stroke="#4268d8" stroke-width="2.5"/>
  <path d="M1058 596 1096 572 1094 640 1056 664Z" fill="#ecd8e0" stroke="#c84050" stroke-width="2.5"/>
  <path d="M795 480 865 484 850 531Z" fill="#e51717"/>
  <path d="M1242 464 1184 480 1208 522Z" fill="#2b57ef"/>
  <path d="M1075 312 1055 370 1092 372Z" fill="#38cf22"/>
  <ellipse cx="1074" cy="370" rx="19" ry="11" fill="#2a9e1a"/>
 </g>

 <!-- orientation gizmo -->
 <g transform="translate(1220 130) scale(.3333)">
  <path d="M963 255 945 270 962 315 978 270Z" fill="#93e23d"/><ellipse cx="962" cy="268" rx="18" ry="14" fill="#8fdc3a"/>
  <path d="M935 340 880 285 856 340 885 345Z" fill="#4b78de"/>
  <path d="M985 335 1040 283 1066 322 1040 340Z" fill="#a6a6a6"/><ellipse cx="1048" cy="311" rx="17" ry="28" transform="rotate(-15 1048 311)" fill="#d4d4d4"/>
  <circle cx="912" cy="370" r="17" fill="#d9503c"/><path d="M912 355 945 360 945 380 912 385Z" fill="#a8a8a8"/>
  <path d="M985 360 1020 350 1020 385 985 375Z" fill="#bdbdbd"/><ellipse cx="1020" cy="368" rx="16" ry="18" fill="#e0e0e0"/>
  <path d="M963 380 936 452H990Z" fill="#b8b8b8"/>
  <path d="M962 310 998 330 998 362 962 382 926 362 926 330Z" fill="#d6d6d6"/><path d="M926 350 962 382 998 350" fill="#bcbcbc"/>
  <rect x="1073" y="229" width="26" height="19" rx="2" fill="#d8d8d8"/><path d="M1078 229V222C1078 214 1090 214 1092 220" fill="none" stroke="#d8d8d8" stroke-width="4"/>
 </g>
 <path d="M1477 192H1497M1477 195H1497" stroke="#7b8c9c" stroke-width="1.2"/>
 <path d="M1523 303 1510 309 1523 315" fill="none" stroke="#98a4b0" stroke-width="1.2"/><path d="M1510 309H1522" stroke="#98a4b0" stroke-width="1"/>
 <text x="1535" y="213" font-family="Liberation Sans" font-size="14" font-weight="bold" fill="#e6e6e6">y</text>
 <text x="1493" y="235" font-family="Liberation Sans" font-size="14" font-weight="bold" fill="#e6e6e6">z</text>
 <text x="1508" y="261" font-family="Liberation Sans" font-size="14" font-weight="bold" fill="#e6e6e6">x</text>
 <text x="1526" y="314" font-family="Liberation Sans" font-size="15" letter-spacing=".4" fill="#b8c0c8">Persp</text>
</svg>
</div>

<!-- overlay tool strip -->
<div class="a" style="left:399px;top:183px;width:49px;height:265px;background:#0c121c;border-radius:4px"></div>
<div class="a" style="left:414px;top:191px;width:20px;height:1px;background:#6a7078"></div>
<div class="a" style="left:414px;top:195px;width:20px;height:1px;background:#6a7078"></div>
<div class="a" style="left:403px;top:205px;width:41px;height:25px;background:#2c3137;border-radius:3px"></div>
<div class="a" style="left:403px;top:234px;width:41px;height:25px;background:#585858;border-radius:3px 3px 0 0"></div>
<div class="a" style="left:403px;top:260px;width:41px;height:25px;background:#40607f"></div>
<div class="a" style="left:403px;top:286px;width:41px;height:25px;background:#585858"></div>
<div class="a" style="left:403px;top:312px;width:41px;height:25px;background:#585858"></div>
<div class="a" style="left:403px;top:338px;width:41px;height:25px;background:#585858"></div>
<div class="a" style="left:403px;top:364px;width:41px;height:25px;background:#585858;border-radius:0 0 3px 3px"></div>
<div class="a" style="left:403px;top:393px;width:41px;height:25px;background:#585858;border-radius:3px 3px 0 0"></div>
<div class="a" style="left:403px;top:419px;width:41px;height:25px;background:#585858;border-radius:0 0 3px 3px"></div>
<svg style="left:403px;top:205px" width="41" height="240" viewBox="0 0 41 240">
 <path d="M20.5 4 29 8.5V17.5L20.5 22 12 17.5V8.5ZM12 8.5 20.5 13 29 8.5M20.5 13V22" fill="none" stroke="#b08a62" stroke-width="1.3"/>
 <path d="M15.5 41V33M18.5 41V30.5M21.5 41V30M24.5 41V32.5M28 38 26 42M13 38 15.5 43" stroke="#d8d8d8" stroke-width="2.8" stroke-linecap="round" fill="none"/><path d="M14 40H27.5L25.5 48 24 51H17L15 46Z" fill="#d8d8d8"/>
 <path d="M20.5 59V75M12.5 67H28.5M20.5 57 17 61H24ZM20.5 77 17 73H24ZM10.5 67 14.5 63.5V70.5ZM30.5 67 26.5 63.5V70.5Z" fill="#e8e8e8" stroke="#e8e8e8" stroke-width="1.5"/>
 <path d="M27.5 88A9.5 9.5 0 0 0 11.5 96M13.5 99A9.5 9.5 0 0 0 29.5 91M28 83V89H22M13 104V98H19" fill="none" stroke="#b8b8b8" stroke-width="1.6"/>
 <path d="M12 112H29V129H12ZM12 123H18V129M19 122 26 115M21.5 115H26V119.5" fill="none" stroke="#b8b8b8" stroke-width="1.5"/>
 <path d="M14 141H27M14 154H27M14 141V154M27 141V154" fill="none" stroke="#d0d0d0" stroke-width="1.3"/><g fill="#d0d0d0"><rect x="11" y="138" width="5" height="5"/><rect x="25" y="138" width="5" height="5"/><rect x="11" y="152" width="5" height="5"/><rect x="25" y="152" width="5" height="5"/></g>
 <circle cx="20.5" cy="171" r="10" fill="none" stroke="#a0a0a0" stroke-width="1.2" stroke-dasharray="5 2"/><path d="M20.5 164V178M13.5 171H27.5" stroke="#c8c8c8" stroke-width="1.6"/><path d="M11 182H14.5L11 178.5ZM30 160H26.5L30 163.5Z" fill="#e0e0e0"/>
 <circle cx="20.5" cy="200" r="10" fill="none" stroke="#a0a0a0" stroke-width="1.2" stroke-dasharray="5 2"/><path d="M20.5 193V207M13.5 200H27.5" stroke="#c8c8c8" stroke-width="1.6"/><path d="M11 211H14.5L11 207.5ZM30 189H26.5L30 192.5Z" fill="#e0e0e0"/>
 <path d="M13 235 17 218M13 235 29 231" stroke="#4aa6d8" stroke-width="1.8" fill="none"/><path d="M17 221 27 227 15 232Z" fill="#dcdcdc"/>
</svg>

<!-- particles overlay -->
<div class="a" style="left:416px;top:608px;width:284px;height:219px;background:#0a0d16;border-radius:4px 4px 0 0"></div>
<div class="a" style="left:423px;top:616px;width:20px;height:1px;background:#7a7a7a"></div>
<div class="a" style="left:423px;top:620px;width:20px;height:1px;background:#7a7a7a"></div>
<div class="t" style="left:450px;top:609px;color:#8e8e8e;letter-spacing:.6px">Particles</div>
<div class="a" style="left:421px;top:632px;width:275px;height:23px;background:#5a5a5a;border-radius:3px"></div>
<div class="a" style="left:503px;top:632px;width:1px;height:23px;background:#222"></div>
<div class="a" style="left:607px;top:632px;width:1px;height:23px;background:#222"></div>
<div class="t" style="left:447px;top:634px;color:#ddd">Play</div>
<div class="t" style="left:530px;top:634px;color:#ddd">Restart</div>
<div class="t" style="left:634px;top:634px;color:#ddd">Stop</div>
<div class="t p" style="left:422px;top:664px">Playback Speed</div>
<div class="a" style="left:561px;top:662px;width:135px;height:21px;background:#2a2a2a;border-radius:3px"></div>
<div class="t" style="left:565px;top:664px;color:#c8c8c8">1.00</div>
<div class="t p" style="left:422px;top:689px">Playback Time</div>
<div class="a" style="left:561px;top:687px;width:135px;height:21px;background:#2a2a2a;border-radius:3px"></div>
<div class="t" style="left:565px;top:689px;color:#c8c8c8">0.09</div>
<div class="t p" style="left:422px;top:714px">Particles</div>
<div class="t" style="left:562px;top:714px;color:#c8c8c8">20</div>
<div class="t p" style="left:422px;top:739px">Speed Range</div>
<div class="t" style="left:562px;top:739px;color:#c8c8c8">0.0 - 0.7</div>
<div class="t p" style="left:422px;top:764px">Simulate Layers</div>
<div class="a" style="left:561px;top:762px;width:135px;height:21px;background:#555;border-radius:3px"></div>
<div class="t" style="left:566px;top:763px;color:#d0d0d0;letter-spacing:.8px">Nothing</div>
<div class="ar" style="left:678px;top:769px"></div>
<div class="a" style="left:421px;top:788px;width:17px;height:16px;background:#2a2a2a;border-radius:3px"></div>
<svg style="left:423px;top:790px" width="13" height="12" viewBox="0 0 13 12"><path d="M2 6.5 5 10 11 2" fill="none" stroke="#ddd" stroke-width="1.8"/></svg>
<div class="t p" style="left:442px;top:789px;letter-spacing:.75px">Resimulate</div>
<div class="a" style="left:421px;top:810px;width:17px;height:16px;background:#2a2a2a;border-radius:3px"></div>
<div class="t p" style="left:442px;top:811px">Show Bounds</div>

<!-- inspector -->
<div class="a" style="left:1612px;top:92px;width:308px;height:24px;background:#282828"></div>
<div class="a" style="left:1613px;top:92px;width:119px;height:24px;background:#3a3a3a;border-radius:3px 3px 0 0"></div>
<div class="a" style="left:1624px;top:99px;width:12px;height:12px;border-radius:50%;background:#c8c8c8"></div>
<div class="a" style="left:1629px;top:101px;width:2px;height:2px;background:#333"></div>
<div class="a" style="left:1629px;top:104px;width:2px;height:5px;background:#333"></div>
<div class="t" style="left:1642px;top:95px;letter-spacing:1.1px">Inspector</div>
<svg style="left:1875px;top:97px" width="12" height="16"><use href="#lock"/></svg>
<svg style="left:1900px;top:97px" width="4" height="16"><use href="#dots"/></svg>
<div class="a" style="left:1612px;top:116px;width:308px;height:650px;background:#3c3c3c"></div>
<div class="a" style="left:1612px;top:92px;width:1px;height:901px;background:#191919"></div>
<div class="a" style="left:1904px;top:116px;width:16px;height:650px;background:#353535"></div>
<div class="a" style="left:1906px;top:137px;width:12px;height:271px;background:#585858;border-radius:6px"></div>
<div class="a" style="left:1907px;top:123px;width:0;height:0;border-left:5px solid transparent;border-right:5px solid transparent;border-bottom:6px solid #c4c4c4"></div>
<div class="a" style="left:1907px;top:751px;width:0;height:0;border-left:5px solid transparent;border-right:5px solid transparent;border-top:6px solid #c4c4c4"></div>
<svg style="left:1622px;top:128px" width="25" height="29"><use href="#cube"/></svg>
<div class="ar" style="left:1645px;top:154px;border-left-width:4.5px;border-right-width:4.5px;border-top-width:6px"></div>
<div class="a" style="left:1672px;top:130px;width:17px;height:18px;background:#2a2a2a;border-radius:2px"></div>
<svg style="left:1674px;top:133px" width="13" height="12" viewBox="0 0 13 12"><path d="M2 6.5 5 10 11 2" fill="none" stroke="#ddd" stroke-width="1.8"/></svg>
<div class="a" style="left:1697px;top:127px;width:105px;height:23px;background:#2a2a2a;border-radius:3px"></div>
<div class="a" style="left:1697px;top:127px;width:98px;height:23px;overflow:hidden"><div class="t b" style="left:3px;top:3px;color:#d8d8d8;letter-spacing:.4px">MuzzleFlashEffect</div></div>
<div class="a" style="left:1807px;top:130px;width:16px;height:18px;background:#2a2a2a;border-radius:2px"></div>
<div class="t" style="left:1829px;top:129px;color:#b8b8b8">Static</div>
<div class="ar" style="left:1886px;top:136px"></div>
<div class="t" style="left:1664px;top:160px;color:#b0b0b0">Tag</div>
<div class="btn" style="left:1697px;top:158px;width:75px;height:21px"></div>
<div class="a" style="left:1697px;top:158px;width:53px;height:21px;overflow:hidden"><div class="t" style="left:5px;top:0;letter-spacing:.3px;color:#d0d0d0">Untagged</div></div>
<div class="ar" style="left:1758px;top:165px;border-left-width:4.5px;border-right-width:4.5px"></div>
<div class="t" style="left:1789px;top:160px;color:#b0b0b0">Layer</div>
<div class="btn" style="left:1836px;top:158px;width:62px;height:21px"></div>
<div class="a" style="left:1836px;top:158px;width:38px;height:21px;overflow:hidden"><div class="t" style="left:5px;top:0;letter-spacing:.3px;color:#d0d0d0">Default</div></div>
<div class="ar" style="left:1884px;top:165px;border-left-width:4.5px;border-right-width:4.5px"></div>
<div class="t" style="left:1643px;top:199px;color:#b0b0b0;letter-spacing:.6px">Prefab</div>
<div class="a" style="left:1695px;top:197px;width:203px;height:23px;background:#2a2a2a;border-radius:3px"></div>
<div class="a" style="left:1875px;top:197px;width:23px;height:23px;background:#333;border-radius:0 3px 3px 0"></div>
<svg style="left:1700px;top:202px" width="13" height="15"><use href="#cube"/></svg>
<div class="t" style="left:1715px;top:200px;letter-spacing:.95px;color:#c8c8c8">MuzzleFlashEffect</div>
<svg style="left:1879px;top:201px" width="14" height="14" viewBox="0 0 14 14"><circle cx="7" cy="7" r="6" fill="none" stroke="#c4c4c4" stroke-width="1.2"/><circle cx="7" cy="7" r="2" fill="#c4c4c4"/></svg>
<div class="btn" style="left:1696px;top:227px;width:93px;height:21px"></div>
<div class="t" style="left:1700px;top:228px;letter-spacing:.75px;color:#c8c8c8">Overrides</div>
<div class="ar" style="left:1773px;top:235px;border-left-width:4.5px;border-right-width:4.5px"></div>
<div class="btn" style="left:1800px;top:225px;width:62px;height:21px"></div>
<div class="t" style="left:1808px;top:225px;letter-spacing:.8px;color:#d0d0d0">Select</div>
<div class="a" style="left:1866px;top:225px;width:38px;height:21px;background:#585858;border-radius:3px 0 0 3px"></div>
<div class="t" style="left:1873px;top:225px;letter-spacing:.3px;color:#d0d0d0">Ope</div>

<div class="a" style="left:1613px;top:255px;width:291px;height:1px;background:#1f1f1f"></div>
<div class="a" style="left:1613px;top:256px;width:291px;height:25px;background:#3e3e3e"></div>
<div class="a" style="left:1620px;top:266px;width:0;height:0;border-left:5.5px solid transparent;border-right:5.5px solid transparent;border-top:9px solid #777"></div>
<svg style="left:1640px;top:261px" width="17" height="17" viewBox="0 0 17 17"><path d="M8.5 9V1" stroke="#7ec850" stroke-width="3"/><path d="M8.5 9 2 14" stroke="#3f8ecb" stroke-width="3"/><path d="M8.5 9 15 14" stroke="#e4683a" stroke-width="3"/></svg>
<div class="t b" style="left:1688px;top:259px;letter-spacing:.6px;color:#d0d0d0;font-size:14px">Transform</div>
<svg style="left:1832px;top:262px" width="14" height="14"><use href="#help"/></svg>
<svg style="left:1856px;top:262px" width="14" height="14"><use href="#slid"/></svg>
<svg style="left:1885px;top:262px" width="4" height="16"><use href="#dots"/></svg>
<div class="t" style="left:1637px;top:290px;width:23px;overflow:hidden;color:#b8b8b8;font-size:14px;letter-spacing:.2px">Position</div>
<div class="t" style="left:1665px;top:290px;color:#b8b8b8;font-size:14px">X</div>
<div class="f" style="left:1684px;top:288px;width:54px;height:23px"></div><div class="t" style="left:1688px;top:290px;color:#d4d4d4">0</div>
<div class="t" style="left:1746px;top:290px;color:#b8b8b8;font-size:14px">Y</div>
<div class="f" style="left:1764px;top:288px;width:54px;height:23px"></div><div class="t" style="left:1768px;top:290px;color:#d4d4d4;letter-spacing:1px">0.056</div>
<div class="t" style="left:1826px;top:290px;color:#b8b8b8;font-size:14px">Z</div>
<div class="f" style="left:1844px;top:288px;width:54px;height:23px;overflow:hidden"><div class="t" style="left:3px;top:1px;color:#d4d4d4;letter-spacing:1.4px">0.6944</div></div>
<div class="t" style="left:1637px;top:315px;color:#b8b8b8;font-size:14px;letter-spacing:.2px">Rot</div>
<div class="t" style="left:1665px;top:315px;color:#b8b8b8;font-size:14px">X</div>
<div class="f" style="left:1684px;top:313px;width:54px;height:23px"></div><div class="t" style="left:1688px;top:315px;color:#d4d4d4">0</div>
<div class="t" style="left:1746px;top:315px;color:#b8b8b8;font-size:14px">Y</div>
<div class="f" style="left:1764px;top:313px;width:54px;height:23px"></div><div class="t" style="left:1768px;top:315px;color:#d4d4d4;letter-spacing:1px">-90</div>
<div class="t" style="left:1826px;top:315px;color:#b8b8b8;font-size:14px">Z</div>
<div class="f" style="left:1844px;top:313px;width:54px;height:23px"></div><div class="t" style="left:1848px;top:315px;color:#d4d4d4">0</div>
<svg style="left:1637px;top:342px" width="15" height="15" viewBox="0 0 15 15"><path d="M5 10.5 3 12.5C-.5 9 3.5 4 7 6.5M9 4.5 11 2.5C14.5 6 11 11 7.5 8.5M2 2 13 13" fill="none" stroke="#a8a8a8" stroke-width="1.3"/></svg>
<div class="t" style="left:1665px;top:341px;color:#b8b8b8;font-size:14px">X</div>
<div class="f" style="left:1683px;top:339px;width:55px;height:23px"></div><div class="t" style="left:1686px;top:340px;color:#c8c8c8">2.5</div>
<div class="t" style="left:1746px;top:340px;color:#b8b8b8;font-size:14px">Y</div>
<div class="f" style="left:1763px;top:339px;width:55px;height:23px"></div><div class="t" style="left:1766px;top:340px;color:#c8c8c8">2.5</div>
<div class="t" style="left:1826px;top:340px;color:#b8b8b8;font-size:14px">Z</div>
<div class="f" style="left:1843px;top:339px;width:55px;height:23px"></div><div class="t" style="left:1846px;top:340px;color:#c8c8c8">2.5</div>

<div class="a" style="left:1613px;top:372px;width:291px;height:1px;background:#1f1f1f"></div>
<div class="a" style="left:1613px;top:373px;width:291px;height:27px;background:#3e3e3e"></div>
<div class="a" style="left:1620px;top:383px;width:0;height:0;border-left:5.5px solid transparent;border-right:5.5px solid transparent;border-top:9px solid #777"></div>
<svg style="left:1640px;top:378px" width="16" height="16" viewBox="0 0 16 16"><circle cx="8" cy="10.5" r="4.5" fill="#5cc4ee"/><circle cx="2" cy="2.5" r="2" fill="#5cc4ee"/><circle cx="8" cy="2" r="1.8" fill="#5cc4ee"/><circle cx="14" cy="2.5" r="2" fill="#5cc4ee"/></svg>
<div class="t b" style="left:1688px;top:377px;letter-spacing:.85px;color:#d0d0d0;font-size:14px">Particle System</div>
<svg style="left:1832px;top:379px" width="14" height="14"><use href="#help"/></svg>
<svg style="left:1856px;top:379px" width="14" height="14"><use href="#slid"/></svg>
<svg style="left:1885px;top:379px" width="4" height="16"><use href="#dots"/></svg>
<div class="btn" style="left:1763px;top:406px;width:135px;height:21px"></div>
<div class="t" style="left:1781px;top:406px;letter-spacing:.55px;color:#d4d4d4">Open Editor...</div>
<div class="a" style="left:1620px;top:434px;width:277px;height:31px;background:#595959;border-radius:3px 3px 0 0"></div>
<div class="a" style="left:1625px;top:437px;width:26px;height:26px;background:#3f3f3f;border-radius:3px"></div>
<div class="a" style="left:1632px;top:446px;width:12px;height:6px;background:#f2f2f2;border-radius:6px 6px 2px 2px"></div>
<div class="t b" style="left:1657px;top:435px;font-size:12.5px;letter-spacing:.85px;color:#f0f0f0">MuzzleFlashEffect</div>
<svg style="left:1884px;top:452px" width="10" height="10" viewBox="0 0 10 10"><path d="M5 1V9M1 5H9" stroke="#ddd" stroke-width="2"/></svg>

<div class="a" style="left:1620px;top:466px;width:284px;height:300px;overflow:hidden">
 <div class="a" style="left:149px;top:5px;width:125px;height:17px;background:#2a2a2a;border-radius:3px"></div>
 <div class="a" style="left:150px;top:24px;width:15px;height:15px;background:#2a2a2a;border-radius:2px"></div>
 <div class="a" style="left:150px;top:43px;width:15px;height:15px;background:#333;border-radius:2px"></div>
 <div class="a" style="left:149px;top:61px;width:106px;height:17px;background:#2a2a2a;border-radius:3px"></div>
 <div class="a" style="left:149px;top:80px;width:106px;height:17px;background:#2a2a2a;border-radius:3px"></div>
 <div class="a" style="left:149px;top:99px;width:106px;height:17px;background:#2a2a2a;border-radius:3px"></div>
 <div class="a" style="left:150px;top:119px;width:15px;height:15px;background:#2a2a2a;border-radius:2px"></div>
 <div class="a" style="left:149px;top:136px;width:106px;height:17px;background:#2a2a2a;border-radius:3px"></div>
 <div class="a" style="left:150px;top:156px;width:15px;height:15px;background:#2a2a2a;border-radius:2px"></div>
 <div class="a" style="left:149px;top:174px;width:40px;height:17px;background:#2a2a2a;border-radius:3px"></div>
 <div class="a" style="left:215px;top:174px;width:40px;height:17px;background:#2a2a2a;border-radius:3px"></div>
 <div class="a" style="left:149px;top:193px;width:125px;height:17px;background:#2a2a2a;border-radius:3px"></div>
 <div class="a" style="left:150px;top:212px;width:105px;height:13px;background:#fff"></div>
 <div class="a" style="left:149px;top:230px;width:124px;height:17px;background:#555;border-radius:3px"></div>
 <div class="a" style="left:149px;top:249px;width:106px;height:17px;background:#2a2a2a;border-radius:3px"></div>
 <div class="a" style="left:149px;top:268px;width:124px;height:17px;background:#555;border-radius:3px"></div>
 <div class="a" style="left:149px;top:287px;width:125px;height:17px;background:#2a2a2a;border-radius:3px"></div>

 <div class="ar n" style="left:260px;top:67px"></div>
 <div class="ar n" style="left:260px;top:86px"></div>
 <div class="ar n" style="left:260px;top:104px"></div>
 <div class="ar n" style="left:260px;top:142px"></div>
 <div class="ar n" style="left:260px;top:180px"></div>
 <div class="ar n" style="left:260px;top:217px"></div>
 <div class="ar n" style="left:254px;top:236px"></div>
 <div class="ar n" style="left:260px;top:255px"></div>
 <div class="ar n" style="left:254px;top:275px"></div>

 <div class="t s" style="left:5px;top:4px">Duration</div><div class="t s" style="left:153px;top:4px">0.1</div>
 <div class="t s" style="left:5px;top:23px">Looping</div>
 <div class="t s" style="left:5px;top:42px;color:#737373">Prewarm</div>
 <div class="t s" style="left:5px;top:61px">Start Delay</div><div class="t s" style="left:153px;top:61px">0</div>
 <div class="t s" style="left:5px;top:79px">Start Lifetime</div><div class="t s" style="left:153px;top:79px">0.1</div>
 <div class="t s" style="left:5px;top:98px">Start Speed</div><div class="t s" style="left:153px;top:98px">0</div>
 <div class="t s" style="left:5px;top:117px">3D Start Size</div>
 <div class="t s" style="left:5px;top:135px">Start Size</div><div class="t s" style="left:153px;top:136px">0.1</div>
 <div class="t s" style="left:5px;top:154px">3D Start Rotation</div>
 <div class="t s" style="left:5px;top:173px">Start Rotation</div><div class="t s" style="left:153px;top:173px">0</div><div class="t s" style="left:219px;top:173px">0</div>
 <div class="t s" style="left:5px;top:192px">Flip Rotation</div><div class="t s" style="left:153px;top:192px">1</div>
 <div class="t s" style="left:5px;top:210px">Start Color</div>
 <div class="t s" style="left:5px;top:229px">Gravity Source</div><div class="t s" style="left:153px;top:229px;color:#d0d0d0">3D Physics</div>
 <div class="t s" style="left:5px;top:248px">Gravity Modifier</div><div class="t s" style="left:153px;top:248px">0</div>
 <div class="t s" style="left:5px;top:267px">Simulation Space</div><div class="t s" style="left:153px;top:267px;color:#d0d0d0">Local</div>
 <div class="t s" style="left:5px;top:285px">Simulation Speed</div><div class="t s" style="left:153px;top:286px">1</div>
</div>

<!-- curves -->
<div class="a" style="left:1613px;top:766px;width:307px;height:26px;background:#3c3c3c;border-top:1px solid #2d2d2d"></div>
<div class="t b" style="left:1622px;top:770px;letter-spacing:.6px;color:#cfcfcf;font-size:14.5px">Particle System Curves</div>
<div class="a" style="left:1803px;top:777px;width:94px;height:1px;background:#5d5d5d"></div>
<div class="a" style="left:1803px;top:780px;width:94px;height:1px;background:#5d5d5d"></div>
<div class="a" style="left:1899px;top:766px;width:1px;height:26px;background:#2b2b2b"></div>
<svg style="left:1909px;top:771px" width="4" height="16"><use href="#dots"/></svg>
<div class="a" style="left:1613px;top:792px;width:307px;height:156px;background:#2c2c2c"></div>
<div class="btn" style="left:1740px;top:797px;width:80px;height:21px;background:#414141"></div>
<div class="t" style="left:1747px;top:799px;color:#7e7e7e;letter-spacing:.8px">Optimize</div>
<div class="btn" style="left:1827px;top:797px;width:79px;height:21px;background:#414141"></div>
<div class="t" style="left:1837px;top:799px;color:#7e7e7e;letter-spacing:.8px">Remove</div>
<div class="a" style="left:1663px;top:824px;width:225px;height:92px;background:#2d2d2d;border:1px solid #313131"></div>
<div class="a" style="left:1775px;top:824px;width:1px;height:92px;background:#333"></div>
<div class="a" style="left:1613px;top:948px;width:307px;height:36px;background:#3a3a3a"></div>
<div class="a" style="left:1613px;top:984px;width:307px;height:1px;background:#232323"></div>
<div class="a" style="left:1613px;top:985px;width:307px;height:8px;background:#3e3e3e"></div>

<!-- project panel -->
<div class="a" style="left:0;top:827px;width:1612px;height:1px;background:#191919"></div>
<div class="a" style="left:0;top:828px;width:1612px;height:25px;background:#282828"></div>
<div class="a" style="left:0;top:828px;width:102px;height:25px;background:#3a3a3a;border-radius:3px 3px 0 0"></div>
<svg style="left:8px;top:834px" width="15" height="14"><use href="#folder"/></svg>
<div class="t" style="left:28px;top:832px;letter-spacing:1px">Project</div>
<svg style="left:113px;top:833px" width="13" height="16" viewBox="0 0 13 16"><rect x=".5" y=".5" width="12" height="15" fill="#c4c4c4"/><path d="M2 4H11M2 7H11M2 10H11M2 13H11" stroke="#333" stroke-width="1"/></svg>
<div class="t" style="left:132px;top:832px;letter-spacing:.9px">Console</div>
<svg style="left:1567px;top:832px" width="12" height="16"><use href="#lock"/></svg>
<svg style="left:1592px;top:832px" width="4" height="16"><use href="#dots"/></svg>
<div class="a" style="left:0;top:853px;width:1612px;height:26px;background:#3c3c3c;border-top:1px solid #2a2a2a;border-bottom:1px solid #232323"></div>
<svg style="left:8px;top:858px" width="16" height="16" viewBox="0 0 16 16"><path d="M8 1V15M1 8H15" stroke="#d0d0d0" stroke-width="2"/></svg>
<div class="ar" style="left:28px;top:862px;border-top-color:#bbb;border-left-width:4.5px;border-right-width:4.5px;border-top-width:5.5px"></div>
<div class="f" style="left:1028px;top:856px;width:396px;height:20px;border-radius:5px"></div>
<svg style="left:1032px;top:861px" width="11" height="11" viewBox="0 0 11 11"><circle cx="4" cy="4" r="2.8" fill="none" stroke="#b8b8b8" stroke-width="1.4"/><path d="M6 6 9.5 10" stroke="#b8b8b8" stroke-width="1.7"/></svg>
<svg style="left:1405px;top:858px" width="17" height="17"><use href="#extlink"/></svg>
<div class="sep" style="left:1428px;top:854px;height:24px"></div>
<svg style="left:1436px;top:857px" width="16" height="18" viewBox="0 0 16 18"><rect x="3" y="1" width="5" height="6" fill="#c4c4c4"/><path d="M9 3 15 11H9Z" fill="#c4c4c4"/><circle cx="5" cy="13" r="4" fill="#c4c4c4"/></svg>
<div class="sep" style="left:1461px;top:854px;height:24px"></div>
<svg style="left:1469px;top:858px" width="14" height="16" viewBox="0 0 14 16"><path d="M7 1 13.5 1.5 13 8 6 15 1 9Z" fill="#ccc"/><circle cx="10.5" cy="4" r="1.3" fill="#3c3c3c"/></svg>
<div class="sep" style="left:1494px;top:854px;height:24px"></div>
<div class="a" style="left:1495px;top:854px;width:33px;height:24px;background:#444"></div>
<svg style="left:1501px;top:856px" width="17" height="20" viewBox="0 0 17 20"><path d="M5 .5H12L16.5 5V15L12 19.5H5L.5 15V5Z" fill="#ddd"/><rect x="7" y="4" width="3" height="8" fill="#444"/><rect x="7" y="13.5" width="3" height="3" fill="#444"/></svg>
<div class="sep" style="left:1528px;top:854px;height:24px"></div>
<svg style="left:1534px;top:858px" width="16" height="15" viewBox="0 0 16 15"><path d="M8 0 10.3 5 15.5 5.6 11.6 9.2 12.7 14.5 8 11.8 3.3 14.5 4.4 9.2 .5 5.6 5.7 5Z" fill="#777"/></svg>
<div class="sep" style="left:1559px;top:854px;height:24px"></div>
<svg style="left:1566px;top:857px" width="19" height="18" viewBox="0 0 19 18"><path d="M1 9C5 3.5 14 3.5 18 9 14 14.5 5 14.5 1 9Z" fill="none" stroke="#b8b8b8" stroke-width="1.3"/><circle cx="9.5" cy="9" r="3" fill="#b8b8b8"/><path d="M15 1 3 17" stroke="#b8b8b8" stroke-width="1.3"/></svg>
<div class="t" style="left:1587px;top:857px;font-size:15px;letter-spacing:0;color:#bbb">25</div>

<!-- project tree -->
<div class="a" style="left:0;top:879px;width:260px;height:114px;background:#383838;overflow:hidden">
 <div class="a" style="left:0;top:70px;width:242px;height:20px;background:#4d4d4d"></div>
 <div class="a" style="left:41px;top:-2px;width:0;height:0;border-left:4.5px solid transparent;border-right:4.5px solid transparent;border-top:8px solid #7a7a7a"></div>
 <svg style="left:58px;top:-7px" width="16" height="14"><use href="#folderopen"/></svg>
 <div class="t" style="left:76px;top:-10px">_materials</div>
 <svg style="left:74px;top:13px" width="15" height="14"><use href="#folder"/></svg>
 <div class="t" style="left:95px;top:10px;letter-spacing:.8px">GunTwo</div>
 <svg style="left:58px;top:33px" width="15" height="14"><use href="#folder"/></svg>
 <div class="t" style="left:76px;top:30px;letter-spacing:.6px">_models</div>
 <div class="a" style="left:41px;top:56px;width:0;height:0;border-left:4.5px solid transparent;border-right:4.5px solid transparent;border-top:8px solid #7a7a7a"></div>
 <svg style="left:58px;top:53px" width="17" height="14"><use href="#folderopen"/></svg>
 <div class="t" style="left:76px;top:50px;letter-spacing:.7px">_prefabs</div>
 <svg style="left:74px;top:73px" width="15" height="14"><use href="#folder"/></svg>
 <div class="t" style="left:95px;top:70px;letter-spacing:.9px">GunLight</div>
 <svg style="left:58px;top:93px" width="15" height="14"><use href="#folder"/></svg>
 <div class="t" style="left:76px;top:90px;letter-spacing:.9px">_scenes</div>
 <div class="a" style="left:242px;top:0;width:17px;height:114px;background:#363636"></div>
 <div class="a" style="left:245px;top:11px;width:0;height:0;border-left:5px solid transparent;border-right:5px solid transparent;border-bottom:6px solid #c4c4c4"></div>
 <div class="a" style="left:245px;top:33px;width:12px;height:29px;background:#585858;border-radius:6px"></div>
 <div class="a" style="left:245px;top:102px;width:0;height:0;border-left:5px solid transparent;border-right:5px solid transparent;border-top:6px solid #c4c4c4"></div>
 <div class="a" style="left:259px;top:0;width:1px;height:114px;background:#232323"></div>
</div>

<!-- project content -->
<div class="a" style="left:260px;top:879px;width:1352px;height:26px;background:#424242"></div>
<div class="t" style="left:265px;top:882px;color:#b8b8b8;letter-spacing:.7px">Assets</div>
<div class="t" style="left:335px;top:882px;color:#b8b8b8;letter-spacing:.7px">Sci Fi Gun Light</div>
<div class="t" style="left:468px;top:882px;color:#b8b8b8;letter-spacing:.7px">_prefabs</div>
<div class="t b" style="left:553px;top:882px;color:#d4d4d4;letter-spacing:.1px">GunLight</div>
<svg style="left:320px;top:887px" width="320" height="11" viewBox="0 0 320 11"><path d="M3 1 8 5.5 3 10M137 1 142 5.5 137 10M223 1 228 5.5 223 10M310 1 315 5.5 310 10" fill="none" stroke="#8c8c8c" stroke-width="1.2"/></svg>
<div class="a" style="left:260px;top:905px;width:1352px;height:63px;background:#333"></div>
<div class="a" style="left:1600px;top:905px;width:12px;height:63px;background:#2f2f2f"></div>
<div class="a" style="left:1599px;top:912px;width:0;height:0;border-left:5px solid transparent;border-right:5px solid transparent;border-bottom:6px solid #c4c4c4"></div>
<div class="a" style="left:1597px;top:925px;width:13px;height:22px;background:#585858;border-radius:6px"></div>
<div class="a" style="left:1599px;top:954px;width:0;height:0;border-left:5px solid transparent;border-right:5px solid transparent;border-top:6px solid #c4c4c4"></div>
<div class="a" style="left:281px;top:921px;width:75px;height:47px;background:#555"></div>
<div class="a" style="left:376px;top:921px;width:75px;height:47px;background:#555"></div>
<div class="a" style="left:471px;top:921px;width:75px;height:47px;background:#555"></div>
<div class="a" style="left:566px;top:921px;width:75px;height:47px;background:#555"></div>
<div class="a" style="left:661px;top:921px;width:75px;height:47px;background:#555"></div>
<svg style="left:0;top:0" width="800" height="970" viewBox="0 0 800 970">
 <defs><g id="ming"><path d="M12 37 22 35 30 36 42 38 55 41 68 47 67 50 54 47 46 50 40 50 38 47 30 45 24 50 20 47Z"/><path d="M24 44 33 45 30 56 34 70 26 70 23 56Z"/><path d="M48 49 56 49 60 62 54 63Z"/></g></defs>
 <g transform="translate(281 921) scale(1 .68)"><use href="#ming" fill="#2e2f33"/><path d="M12 37 22 35 32 39 23 46 15 43Z" fill="#c93a3a"/></g>
 <g transform="translate(376 921) scale(1 .68)"><use href="#ming" fill="#1e2f66"/><path d="M12 37 22 35 32 39 23 46 15 43Z" fill="#34b4d8"/></g>
 <g transform="translate(471 921) scale(1 .68)"><use href="#ming" fill="#8f8f8f"/><path d="M12 37 22 35 32 39 23 46 15 43Z" fill="#b87878"/></g>
 <g transform="translate(566 921) scale(1 .68)"><use href="#ming" fill="#8f8f8f"/><path d="M12 37 22 35 32 39 23 46 15 43Z" fill="#b87878"/></g>
 <g transform="translate(661 921) scale(1 .68)"><use href="#ming" fill="#8f8f8f"/><path d="M12 37 22 35 32 39 23 46 15 43Z" fill="#b87878"/></g>
</svg>
<div class="a" style="left:260px;top:968px;width:1352px;height:25px;background:#424242"></div>
<div class="a" style="left:1522px;top:978px;width:69px;height:4px;background:#6a6a6a;border-radius:2px"></div>
<div class="a" style="left:1556px;top:974px;width:12px;height:12px;background:#a8a8a8;border-radius:50%"></div>
<div class="a" style="left:1612px;top:827px;width:1px;height:166px;background:#191919"></div>

<!-- status bar -->
<div class="a" style="left:0;top:993px;width:1920px;height:27px;background:#191919"></div>
<div class="a" style="left:0;top:1020px;width:1920px;height:1px;background:#d8dcdc"></div>
<svg style="left:1795px;top:997px" width="118" height="19" viewBox="0 0 118 19">
 <path d="M5 6C5 3 13 3 13 6V14C13 18 5 18 5 14Z" fill="#c8c8c8"/><path d="M1 1 17 18M1 7 5 8M17 7 13 8M1 12 5 11M17 12 13 11M5 1 7 4M13 1 11 4" stroke="#c8c8c8" stroke-width="1.3"/>
 <path d="M36 3C36 .5 50 .5 50 3V6C50 8 43 9.5 36 8ZM36 9C40 11 46 11 50 9.5V12C48 14 40 15 36 12Z" fill="#c8c8c8"/><path d="M38 11 51 18" stroke="#c8c8c8" stroke-width="1.3"/>
 <path d="M70 9C74 3 80 3 84 9 80 15 74 15 70 9Z" fill="none" stroke="#aaa" stroke-width="1.3"/><circle cx="77" cy="9" r="2.5" fill="#aaa"/><path d="M72 1H82M72 17H82M71 1 84 18" stroke="#aaa" stroke-width="1.2"/>
 <circle cx="107" cy="10" r="8" fill="none" stroke="#c4c4c4" stroke-width="1.3"/><path d="M103 10 106 13 112 7" fill="none" stroke="#c4c4c4" stroke-width="1.4"/>
</svg>
</body></html>
